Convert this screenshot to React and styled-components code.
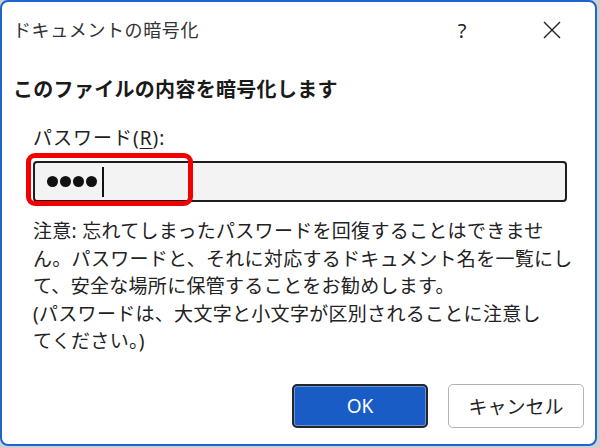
import React from "react";
import styled, { createGlobalStyle } from "styled-components";

const GlobalStyle = createGlobalStyle`
  html, body {
    margin: 0;
    padding: 0;
    background: #cfcfcf;
  }
  body {
    font-family: "Noto Sans", "Noto Sans CJK JP", sans-serif;
    color: #1c1c1c;
  }
`;

// dialog window

const Window = styled.div`
  box-sizing: border-box;
  width: 597px;
  height: 446px;
  border: 2px solid #1f63d1;
  border-radius: 8px;
  background: #ffffff;
  display: flex;
  flex-direction: column;
  overflow: hidden;
`;

// title bar

const TitleBar = styled.div`
  height: 56px;
  display: flex;
  align-items: center;
  padding: 0 20px 0 11px;
`;

const Title = styled.div`
  flex: 1;
  font-size: 18px;
  letter-spacing: 0.6px;
  line-height: 24px;
  color: #333333;
  white-space: nowrap;
`;

const Controls = styled.div`
  display: flex;
  align-items: center;
  gap: 44px;
`;

const ControlButton = styled.div`
  width: 46px;
  height: 32px;
  display: flex;
  align-items: center;
  justify-content: center;
  font-size: 20px;
  color: #222;
`;

// content

const Heading = styled.div`
  margin: 18px 0 0 11px;
  font-size: 20px;
  font-weight: 700;
  letter-spacing: 0.3px;
  line-height: 28px;
  color: #1a1a1a;
  white-space: nowrap;
`;

const Label = styled.div`
  margin: 22px 0 0 31px;
  font-size: 19px;
  letter-spacing: 1px;
  line-height: 24px;
  color: #222;
  u {
    text-decoration-thickness: 1px;
    text-underline-offset: 3px;
  }
`;

const FieldWrap = styled.div`
  position: relative;
  margin: 11px 0 0 31px;
  width: 534px;
`;

const Field = styled.div`
  box-sizing: border-box;
  height: 41px;
  border: 2px solid #1e1e1e;
  border-radius: 4px;
  background: #f3f3f3;
  display: flex;
  align-items: center;
  padding-left: 12px;
  gap: 2px;
`;

const Dot = styled.span`
  width: 11px;
  height: 11px;
  border-radius: 50%;
  background: #111;
`;

const Caret = styled.span`
  width: 2px;
  height: 30px;
  margin-left: 3px;
  background: #111;
`;

const Highlight = styled.div`
  position: absolute;
  left: -7px;
  top: -8px;
  width: 167px;
  height: 53px;
  box-sizing: border-box;
  border: 5px solid #f20000;
  border-radius: 9px;
  pointer-events: none;
`;

const Note = styled.div`
  margin: 16px 0 0 31px;
  font-size: 19px;
  letter-spacing: 0.3px;
  line-height: 27.5px;
  color: #222;
  white-space: nowrap;
  span {
    display: block;
  }
`;

// buttons

const ButtonRow = styled.div`
  margin-top: auto;
  padding: 0 11px 16px 0;
  display: flex;
  justify-content: flex-end;
  gap: 20px;
`;

const Button = styled.button`
  box-sizing: border-box;
  width: 136px;
  height: 44px;
  border-radius: 5px;
  font-family: "Noto Sans", "Noto Sans CJK JP", sans-serif;
  font-size: 19px;
  border: ${(p) => (p.$primary ? "2px solid #262626" : "1.5px solid #b2b2b2")};
  background: ${(p) => (p.$primary ? "#1a5cc6" : "#ffffff")};
  color: ${(p) => (p.$primary ? "#ffffff" : "#222222")};
  box-shadow: ${(p) => (p.$primary ? "inset 0 0 0 1px #ffffff55" : "none")};
`;

const CloseIcon = () => (
  <svg width="18" height="18" viewBox="0 0 18 18">
    <path d="M1 1 L17 17 M17 1 L1 17" stroke="#222" strokeWidth="1.4" />
  </svg>
);

export default function App() {
  return (
    <>
      <GlobalStyle />
      <Window>
        <TitleBar>
          <Title>ドキュメントの暗号化</Title>
          <Controls>
            <ControlButton>?</ControlButton>
            <ControlButton>
              <CloseIcon />
            </ControlButton>
          </Controls>
        </TitleBar>
        <Heading>このファイルの内容を暗号化します</Heading>
        <Label>
          パスワード(<u>R</u>):
        </Label>
        <FieldWrap>
          <Field>
            {[0, 1, 2, 3].map((i) => (
              <Dot key={i} />
            ))}
            <Caret />
          </Field>
          <Highlight />
        </FieldWrap>
        <Note>
          <span>注意: 忘れてしまったパスワードを回復することはできませ</span>
          <span>ん。パスワードと、それに対応するドキュメント名を一覧にし</span>
          <span>て、安全な場所に保管することをお勧めします。</span>
          <span>(パスワードは、大文字と小文字が区別されることに注意し</span>
          <span>てください。)</span>
        </Note>
        <ButtonRow>
          <Button $primary>OK</Button>
          <Button>キャンセル</Button>
        </ButtonRow>
      </Window>
    </>
  );
}
